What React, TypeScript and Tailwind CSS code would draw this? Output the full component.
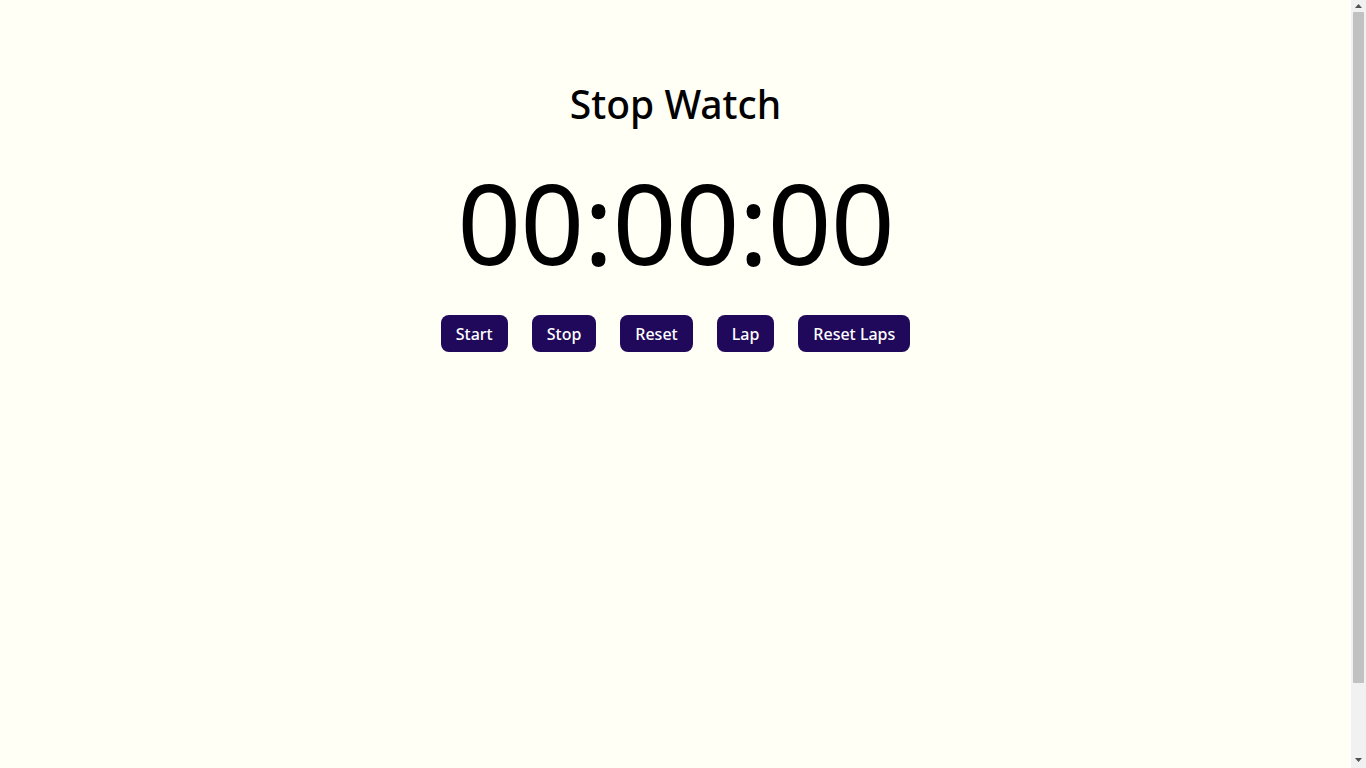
const buttons = ["Start", "Stop", "Reset", "Lap", "Reset Laps"];

export default function App() {
  return (
    <div className="flex h-screen overflow-hidden bg-[#fffff6] font-['Noto_Sans',sans-serif] text-black">
      <main className="flex-1">
        <div className="flex flex-col items-center pt-[78px]">
          <h1 className="text-[39px] leading-[52px] font-medium">Stop Watch</h1>
          <div className="mt-[32px] text-[112px] leading-[120px] tracking-[-1px]">00:00:00</div>
          <div className="mt-[33px] flex gap-[24px]">
            {buttons.map((b) => (
              <button
                key={b}
                className="h-[37px] rounded-[8px] bg-[#20095a] px-[15px] text-[16px] font-medium text-white"
              >
                {b}
              </button>
            ))}
          </div>
        </div>
      </main>
      {/* fake scrollbar */}
      <div className="flex w-[15px] flex-col items-center bg-[#f1f1f1]">
        <svg width="15" height="12" viewBox="0 0 15 12" className="shrink-0">
          <path d="M4 8 L7.5 4 L11 8 Z" fill="#505050" />
        </svg>
        <div className="h-[671px] w-[11px] rounded-[1px] bg-[#c1c1c1]" />
        <div className="flex-1" />
        <svg width="15" height="14" viewBox="0 0 15 14" className="shrink-0">
          <path d="M4 4 L11 4 L7.5 8 Z" fill="#505050" />
        </svg>
      </div>
    </div>
  );
}
